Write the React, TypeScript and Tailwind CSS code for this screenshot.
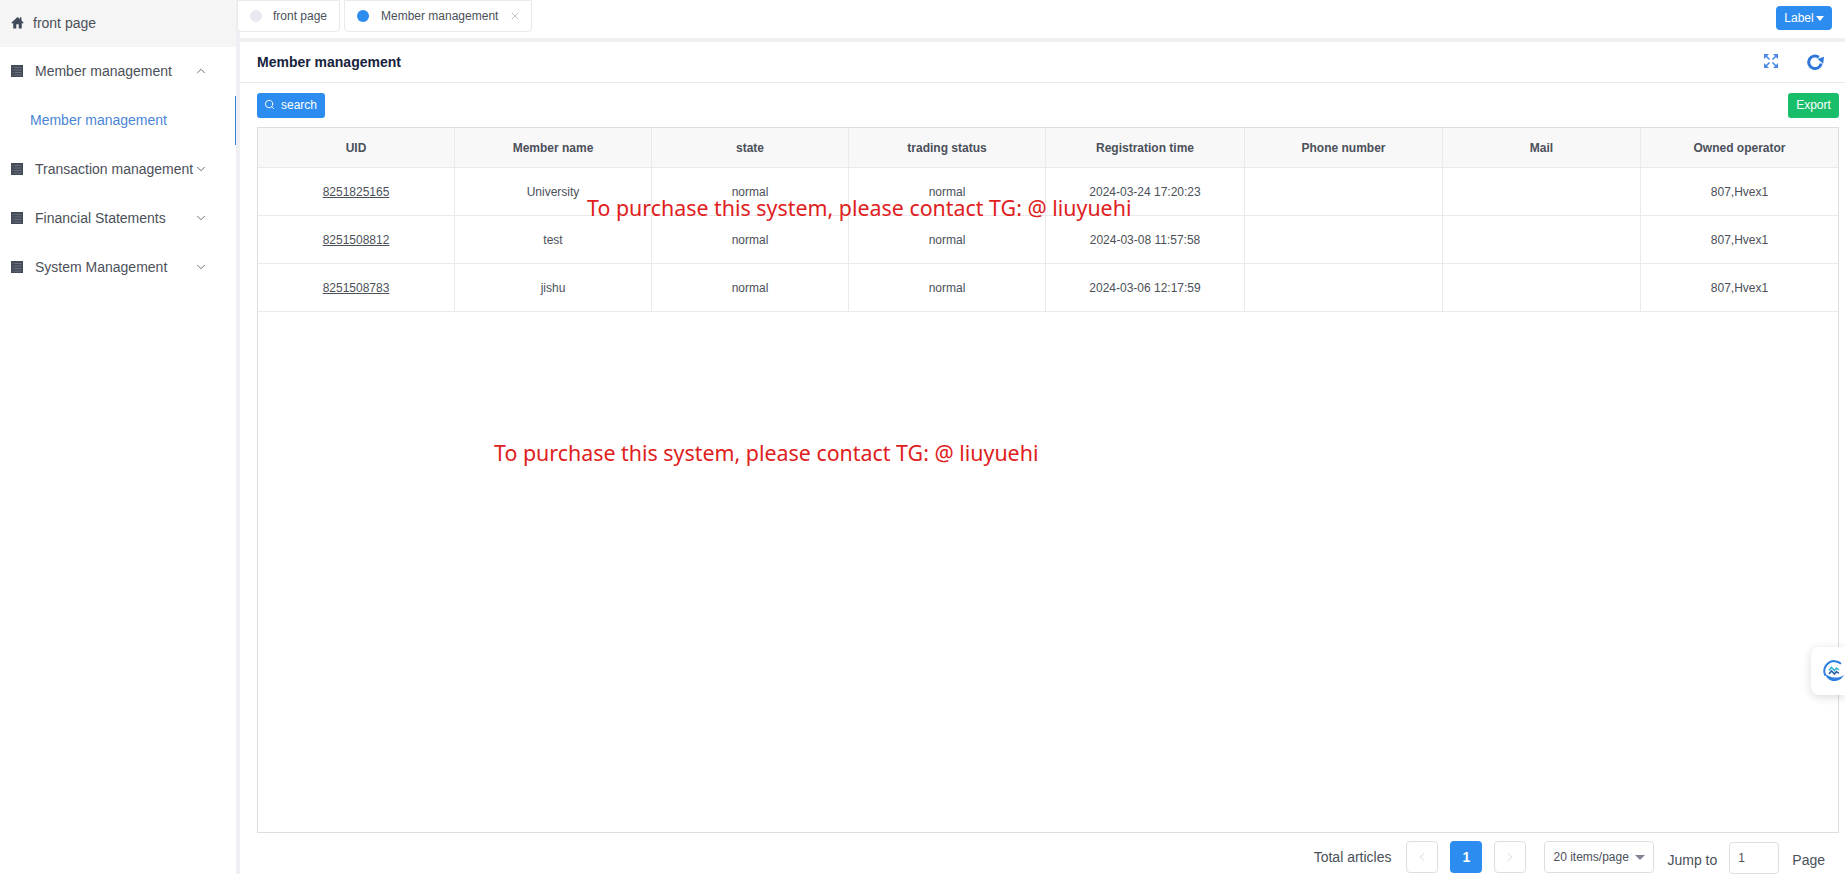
import React from "react";
import { ChevronDown, ChevronLeft, ChevronRight, ChevronUp, Search, X } from "lucide-react";

const columns = [
  { label: "UID", width: "w-[197px]" },
  { label: "Member name", width: "w-[197px]" },
  { label: "state", width: "w-[197px]" },
  { label: "trading status", width: "w-[197px]" },
  { label: "Registration time", width: "w-[199px]" },
  { label: "Phone number", width: "w-[198px]" },
  { label: "Mail", width: "w-[198px]" },
  { label: "Owned operator", width: "" },
];

const members = [
  { uid: "8251825165", name: "University", time: "2024-03-24 17:20:23" },
  { uid: "8251508812", name: "test", time: "2024-03-08 11:57:58" },
  { uid: "8251508783", name: "jishu", time: "2024-03-06 12:17:59" },
];

const menus = [
  { label: "Transaction management" },
  { label: "Financial Statements" },
  { label: "System Management" },
];

const HomeIcon = () => (
  <svg viewBox="0 0 14 14" className="w-[13px] h-[13px] fill-[#3f4a5a]">
    <path d="M7 1 0.4 7.4l1 .9L2.400 7.400V13.500h3.300V9h2.600v4.500h3.300V7.400l1 .9 1-.9L11.200 4.600V1.400H9.600v1.700z" />
  </svg>
);

const ListIcon = () => (
  <svg viewBox="0 0 12 12" className="w-[12px] h-[12px] shrink-0">
    <rect width="12" height="12" fill="#444b58" />
    <path d="M1.500 2.500h1M1.500 5h1M1.500 7.500h1M1.500 10h1M3.500 2.500h7M3.500 5h7M3.500 7.500h7M3.500 10h7" stroke="#7d838e" strokeWidth="0.7" />
  </svg>
);

const ExpandIcon = () => (
  <svg viewBox="0 0 14 14" className="w-[14px] h-[14px] -mt-[2px]">
    <path d="M0 0h5L0 5zM14 0v5L9 0zM0 14V9l5 5zM14 14H9l5-5z" fill="#4a8ae5" />
    <path d="M2 2l3.500 3.500M12 2L8.500 5.500M2 12l3.500-3.500M12 12L8.500 8.500" stroke="#4a8ae5" strokeWidth="1.600" />
  </svg>
);

const RefreshIcon = () => (
  <svg viewBox="0 0 18 18" className="w-[18px] h-[18px]">
    <path d="M12.800 4.200A6.300 6.300 0 1 0 15.200 10.500" fill="none" stroke="#2f78d8" strokeWidth="3" />
    <path d="M11.500 6 18 3.800 17.200 10.800z" fill="#2f78d8" />
  </svg>
);

const WidgetLogo = () => (
  <svg viewBox="0 0 24 24" className="w-[24px] h-[24px]">
    <path d="M19 4.800A10 10 0 0 0 3.200 16.500" fill="none" stroke="#2f7fe0" strokeWidth="2" />
    <path d="M2.500 14c2 5.500 5.500 8 9.500 8s7.500-1.500 10-6c-3 2-6 2.700-9.500 2.500S5.500 17 2.500 14z" fill="#2f7fe0" />
    <path d="M7 11.500l2.500-3 3 3 2-2.500 2.500 2" fill="none" stroke="#35b3d8" strokeWidth="1.600" />
    <path d="M7 15l2.500-3 3 3 2-2.500 2.500 2" fill="none" stroke="#2a5fa8" strokeWidth="1.600" />
  </svg>
);

const PageButton = ({ children }: { children: React.ReactNode }) => (
  <div className="w-8 h-8 flex items-center justify-center border border-[#dcdee2] rounded text-[#c5c8ce]">
    {children}
  </div>
);

const App = () => {
  return (
    <div className="relative flex h-[874px] w-[1845px] overflow-hidden bg-white font-['Liberation_Sans',Arial,sans-serif] text-[#4b5059]">
      <aside className="w-[237px] shrink-0">
        <div className="border-r border-[#dcdee2] text-sm">
          <div className="flex items-center h-[47px] pb-[2px] pl-[11px] gap-[9px] bg-[#f5f5f5]">
            <HomeIcon />
            <span>front page</span>
          </div>
          <div className="flex items-center h-[49px] pb-[2px] pl-[11px] pr-[28px]">
            <ListIcon />
            <span className="ml-[12px] flex-1">Member management</span>
            <ChevronUp size={14} strokeWidth={1.4} />
          </div>
          <div className="flex items-center h-[49px] pb-[2px] pl-[30px] -mr-px text-[#4a86d8] border-r-2 border-[#3a7fd5]">
            Member management
          </div>
          {menus.map((m) => (
            <div key={m.label} className="flex items-center h-[49px] pb-[2px] pl-[11px] pr-[28px]">
              <ListIcon />
              <span className="ml-[12px] flex-1 whitespace-nowrap">{m.label}</span>
              <ChevronDown size={14} strokeWidth={1.4} className="shrink-0" />
            </div>
          ))}
        </div>
      </aside>

      <main className="flex-1 flex flex-col min-w-0 border-l-[4px] border-[#eef0f3] -ml-px">
        <div className="flex items-start justify-between h-[38px] -ml-[3px] pr-[13px]">
          <div className="flex gap-[4px]">
            <div className="flex items-center h-[32px] w-[103px] pl-[12px] gap-[11px] border border-[#e8eaec] rounded-b bg-white text-xs">
              <span className="w-3 h-3 rounded-full bg-[#e8eaf0]" />
              front page
            </div>
            <div className="flex items-center h-[32px] w-[188px] pl-[12px] gap-[12px] border border-[#e8eaec] rounded-b bg-white text-xs">
              <span className="w-3 h-3 rounded-full bg-[#2d8cf0]" />
              Member management
              <X size={12} strokeWidth={1.2} className="text-[#999] -ml-px" />
            </div>
          </div>
          <div className="mt-[6px] flex items-center justify-center gap-[2px] w-[56px] h-[24px] rounded bg-[#2d8cf0] text-xs text-white">
            Label
            <span className="w-0 h-0 border-x-[4px] border-x-transparent border-t-[5px] border-t-white" />
          </div>
        </div>
        <div className="h-[4px] bg-[#eef0f3]" />

        <div className="flex-1 flex flex-col min-h-0 px-[17px] pr-[6px]">
          <div className="flex items-center justify-between h-[41px] -mx-[17px] -mr-[6px] pl-[17px] pr-[13px] border-b border-[#e8eaec]">
            <span className="text-sm font-bold text-[#17233d]">Member management</span>
            <div className="flex items-center gap-[28px] pr-[8px]">
              <ExpandIcon />
              <RefreshIcon />
            </div>
          </div>

          <div className="flex items-center justify-between mt-[10px] mb-[9px]">
            <div className="flex items-center gap-[6px] h-[25px] w-[68px] pl-[7px] pb-px rounded-[3px] bg-[#2d8cf0] text-xs text-white">
              <Search size={11} strokeWidth={2} />
              search
            </div>
            <div className="flex items-center justify-center h-[25px] w-[51px] pb-px rounded-[3px] bg-[#19be6b] text-xs text-white">
              Export
            </div>
          </div>

          <div className="h-[707px] border border-[#dcdee2]">
            <table className="w-full table-fixed border-separate border-spacing-0 text-xs">
              <thead>
                <tr className="bg-[#f8f8f9]">
                  {columns.map((c) => (
                    <th key={c.label} className={`${c.width} h-[40px] pt-[2px] font-bold border-r border-b border-[#e8eaec] last:border-r-0`}>
                      {c.label}
                    </th>
                  ))}
                </tr>
              </thead>
              <tbody>
                {members.map((m) => (
                  <tr key={m.uid} className="text-center">
                    <td className="h-[48px] pt-[2px] border-r border-b border-[#e8eaec] underline">{m.uid}</td>
                    <td className="pt-[2px] border-r border-b border-[#e8eaec]">{m.name}</td>
                    <td className="pt-[2px] border-r border-b border-[#e8eaec]">normal</td>
                    <td className="pt-[2px] border-r border-b border-[#e8eaec]">normal</td>
                    <td className="pt-[2px] border-r border-b border-[#e8eaec]">{m.time}</td>
                    <td className="border-r border-b border-[#e8eaec]"></td>
                    <td className="border-r border-b border-[#e8eaec]"></td>
                    <td className="pt-[2px] border-b border-[#e8eaec]">807,Hvex1</td>
                  </tr>
                ))}
              </tbody>
            </table>
          </div>

          <div className="flex items-center justify-end mt-[7px] pr-[14px] text-sm">
            <span className="mr-[15px]">Total articles</span>
            <PageButton><ChevronLeft size={14} strokeWidth={1.2} /></PageButton>
            <div className="w-8 h-8 mx-[12px] flex items-center justify-center rounded bg-[#2d8cf0] text-white font-bold">1</div>
            <PageButton><ChevronRight size={14} strokeWidth={1.2} /></PageButton>
            <div className="ml-[18px] flex items-center justify-between w-[110px] h-8 pl-[8px] pr-[8px] border border-[#dcdee2] rounded text-xs">
              20 items/page
              <span className="w-0 h-0 border-x-[5px] border-x-transparent border-t-[5px] border-t-[#808695]" />
            </div>
            <span className="ml-[13px] mt-[5px]">Jump to</span>
            <div className="ml-[12px] mt-[2px] flex items-center w-[50px] h-8 pl-[8px] border border-[#dcdee2] rounded text-xs">1</div>
            <span className="ml-[13px] mt-[5px]">Page</span>
          </div>
        </div>
      </main>

      <div className="absolute left-[587px] top-[196px] text-[21.4px] leading-[24px] whitespace-nowrap text-[#e02020] font-['Noto_Sans',sans-serif]">
        To purchase this system, please contact TG: @ liuyuehi
      </div>
      <div className="absolute left-[494px] top-[441px] text-[21.4px] leading-[24px] whitespace-nowrap text-[#e02020] font-['Noto_Sans',sans-serif]">
        To purchase this system, please contact TG: @ liuyuehi
      </div>

      <div className="absolute right-0 top-[647px] flex items-center justify-end w-[34px] h-[48px] rounded-l-lg bg-white shadow-[0_2px_10px_rgba(0,0,0,0.15)] overflow-hidden">
        <div className="mr-[-1px]"><WidgetLogo /></div>
      </div>
    </div>
  );
};

export default App;
